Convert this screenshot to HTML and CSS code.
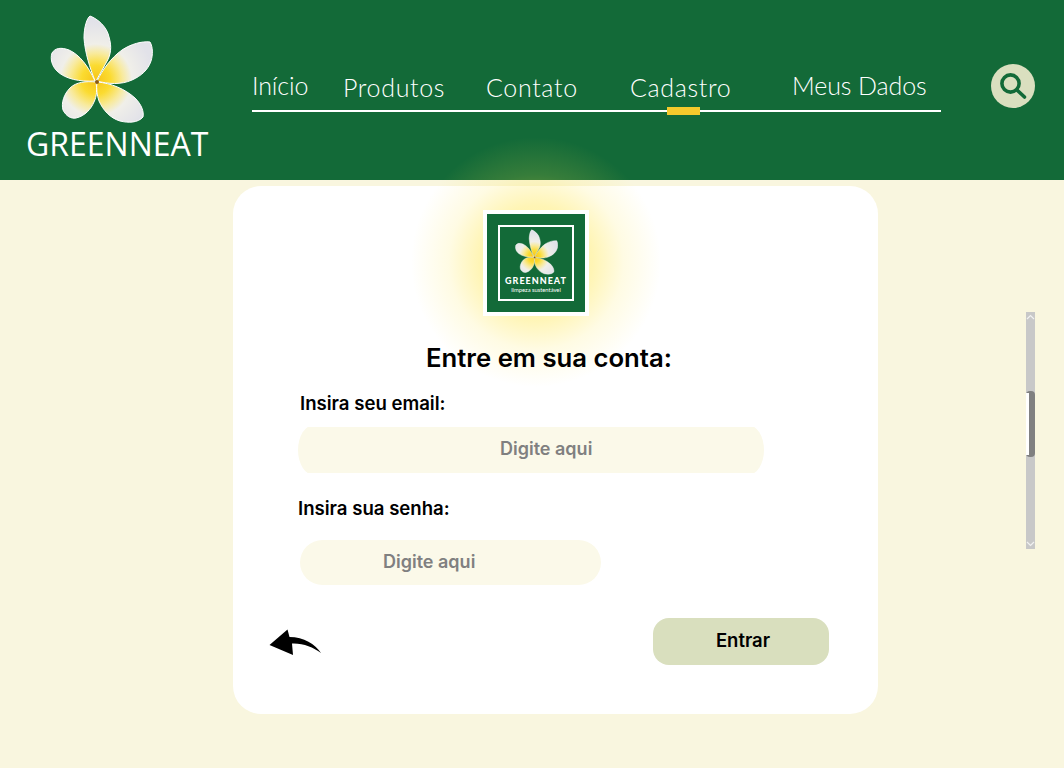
FILE: index.html
```html
<!DOCTYPE html>
<html lang="pt-BR">
<head>
<meta charset="utf-8">
<title>Greenneat</title>
<link rel="stylesheet" href="styles.css">
</head>
<body>
<svg class="defs" width="0" height="0" aria-hidden="true">
  <defs>
    <radialGradient id="petal" gradientUnits="userSpaceOnUse" cx="96" cy="80" r="58">
      <stop offset="0" stop-color="#f6c41a"/>
      <stop offset="0.25" stop-color="#fbdb30"/>
      <stop offset="0.46" stop-color="#f8ea9c"/>
      <stop offset="0.62" stop-color="#f0efe9"/>
      <stop offset="1" stop-color="#e2e2e9"/>
    </radialGradient>
    <symbol id="flower" viewBox="50 15 103 108">
      <g fill="url(#petal)" stroke="#ffffff" stroke-width="1" stroke-linejoin="round">
        <path d="M95 81C90 68 85 53 84 38C84 27 87 18 90 16C98 19 107 27 109 37C112 47 111 55 106 63C103 69 99 75 96 81Z"/>
        <path d="M97 81C103 69 111 58 122 50C131 44 142 41 150 42C153 47 153 55 151 61C148 70 141 76 132 80C121 85 108 84 97 81Z"/>
        <path d="M97 82C111 83 125 89 135 98C142 105 144 112 143 117C138 123 128 123 120 121C110 118 103 110 99 101C97 95 96 89 97 82Z"/>
        <path d="M96 82C86 81 76 82 70 88C64 94 61 103 63 110C66 116 71 119 76 118C85 116 91 109 94 102C97 96 97 89 96 82Z"/>
        <path d="M95 81C88 66 80 55 69 50C61 47 55 48 52 53C50 59 52 66 57 71C65 79 80 82 95 81Z"/>
      </g>
      <circle cx="97" cy="82" r="2" fill="#8a5a14"/>
    </symbol>
  </defs>
</svg>

<header class="topbar">
  <a class="brand">
    <svg class="brand-flower"><use href="#flower"/></svg>
    <span class="brand-name">GREENNEAT</span>
  </a>
  <nav class="nav">
    <a class="nav-item nav-raised">Início</a>
    <a class="nav-item">Produtos</a>
    <a class="nav-item">Contato</a>
    <a class="nav-item nav-active">Cadastro</a>
    <a class="nav-item nav-raised">Meus Dados</a>
  </nav>
  <button class="search" aria-label="Buscar">
    <svg viewBox="0 0 28 28" width="28" height="28">
      <circle cx="11.5" cy="11.5" r="8.6" fill="none" stroke="#136a38" stroke-width="3.6"/>
      <path d="M18 18L25.5 25" stroke="#136a38" stroke-width="3.6" stroke-linecap="round"/>
    </svg>
  </button>
</header>

<main class="card">
  <div class="logo">
    <div class="logo-frame">
      <svg class="logo-flower"><use href="#flower"/></svg>
      <span class="logo-name">GREENNEAT</span>
      <span class="logo-tag">limpeza sustentável</span>
    </div>
  </div>
  <h1 class="title">Entre em sua conta:</h1>
  <form class="form">
    <label class="label label-email">Insira seu email:</label>
    <div class="field field-email">Digite aqui</div>
    <label class="label label-pass">Insira sua senha:</label>
    <div class="field field-pass">Digite aqui</div>
    <div class="actions">
      <svg class="back" viewBox="0 0 52 27" width="52" height="27" aria-label="Voltar">
        <path d="M0.5 16L18.5 0.5L20.5 8C35 8 46 15 52 24C44 18 34 14 23 14.5L24 26Z" fill="#000"/>
      </svg>
      <button class="submit" type="button">Entrar</button>
    </div>
  </form>
</main>

<div class="glow"></div>

<div class="scrollbar">
  <svg class="scroll-arrow" viewBox="0 0 9 6" width="9" height="6"><path d="M1 5L4.5 1.5L8 5" fill="none" stroke="#f1f1f1" stroke-width="1.2"/></svg>
  <div class="scroll-thumb"></div>
  <svg class="scroll-arrow" viewBox="0 0 9 6" width="9" height="6"><path d="M1 1L4.5 4.5L8 1" fill="none" stroke="#f1f1f1" stroke-width="1.2"/></svg>
</div>
</body>
</html>
```
FILE: styles.css
```css
* { box-sizing: border-box; }
html, body { margin: 0; height: 100%; }
body {
  position: relative;
  height: 768px;
  overflow: hidden;
  background: #f9f6df;
  font-family: "Inter", "Noto Sans", sans-serif;
  color: #000;
}
.defs { position: absolute; }

.topbar {
  display: flex;
  height: 180px;
  background: #136a38;
  color: #fff;
}
.brand {
  display: flex;
  flex-direction: column;
  align-items: flex-start;
  width: 252px;
  padding: 15px 0 0 26px;
}
.brand-flower {
  width: 103px;
  height: 108px;
  margin-left: 24px;
}
.brand-name {
  font-family: "Open Sans", sans-serif;
  font-size: 32px;
  line-height: 44px;
  margin-top: -1px;
  white-space: nowrap;
}
.nav {
  display: grid;
  grid-template-columns: 91px 143px 144px 162px 149px;
  align-items: end;
  width: 689px;
  height: 112px;
  border-bottom: 2px solid #fff;
  font-family: "Lato", sans-serif;
  font-size: 25px;
  font-weight: 300;
  letter-spacing: 0.65px;
}
.nav-item {
  position: relative;
  line-height: 30px;
  padding-bottom: 8px;
  white-space: nowrap;
}
.nav-raised {
  padding-bottom: 10px;
  letter-spacing: -0.1px;
}
.nav-active::after {
  content: "";
  position: absolute;
  left: 37px;
  bottom: -5px;
  width: 33px;
  height: 8px;
  background: #f5c92c;
}
.search {
  width: 44px;
  height: 44px;
  margin: 64px 0 0 50px;
  padding: 0;
  border: 0;
  border-radius: 50%;
  background: #dadfbf;
  display: flex;
  align-items: center;
  justify-content: center;
}

.card {
  width: 645px;
  height: 528px;
  margin: 6px 0 0 233px;
  padding-top: 24px;
  background: #fff;
  border-radius: 28px;
}
.logo {
  position: relative;
  z-index: 2;
  width: 106px;
  height: 106px;
  margin-left: 250px;
  padding: 4px;
  background: #fff;
}
.logo-frame {
  height: 98px;
  background: #136a38;
  position: relative;
  color: #fff;
  display: flex;
  flex-direction: column;
  align-items: center;
}
.logo-frame::before {
  content: "";
  position: absolute;
  inset: 11px;
  border: 2px solid #fff;
}
.logo-flower {
  width: 43px;
  height: 46px;
  margin-top: 15px;
}
.logo-name {
  font-family: "Lato", sans-serif;
  font-weight: 900;
  font-size: 9px;
  letter-spacing: 1px;
  line-height: 11px;
}
.logo-tag {
  font-family: "Lato", sans-serif;
  font-size: 5.8px;
  line-height: 7px;
}
.title {
  position: relative;
  z-index: 2;
  margin: 26px 0 0 193px;
  font-size: 25.7px;
  line-height: 32px;
  font-weight: 600;
  white-space: nowrap;
}
.form {
  position: relative;
  z-index: 2;
}
.label {
  display: block;
  font-size: 18.6px;
  font-weight: 600;
  line-height: 24px;
  white-space: nowrap;
}
.label-email { margin: 17px 0 0 67px; }
.label-pass { margin: 23px 0 0 65px; }
.field {
  background: #fbf9e9;
  color: #808080;
  font-size: 18px;
  font-weight: 600;
  display: flex;
  align-items: center;
}
.field-email {
  width: 466px;
  height: 50px;
  margin: 10px 0 -2px 65px;
  padding: 0 0 4px 202px;
  border-radius: 16px / 25px;
  clip-path: inset(2px 0);
}
.field-pass {
  width: 301px;
  height: 45px;
  margin: 20px 0 0 67px;
  padding: 0 0 3px 83px;
  border-radius: 23px;
}
.actions {
  display: flex;
  justify-content: space-between;
  align-items: center;
  width: 560px;
  margin: 33px 0 0 36px;
}
.back { margin-top: 1px; }
.submit {
  width: 176px;
  height: 47px;
  padding: 0 0 4px 4px;
  border: 0;
  border-radius: 16px;
  background: #d9dfbe;
  font-family: inherit;
  font-size: 18.5px;
  font-weight: 600;
  color: #000;
}

.glow {
  position: absolute;
  left: 411px;
  top: 137px;
  width: 250px;
  height: 250px;
  border-radius: 50%;
  background: radial-gradient(circle closest-side, rgba(255, 228, 60, 0.55) 0%, rgba(255, 228, 60, 0.38) 45%, rgba(255, 230, 70, 0.15) 70%, rgba(255, 232, 80, 0) 100%);
  z-index: 1;
}

.scrollbar {
  position: absolute;
  left: 1026px;
  top: 312px;
  width: 9px;
  height: 237px;
  background: #c8c8c8;
  display: flex;
  flex-direction: column;
  justify-content: space-between;
  padding: 2px 0;
}
.scroll-arrow { display: block; }
.scroll-thumb {
  position: absolute;
  left: 0;
  top: 79px;
  width: 9px;
  height: 66px;
  background: #808080;
  border-radius: 4px;
}
.scroll-thumb::before {
  content: "";
  position: absolute;
  left: 0;
  top: 2px;
  bottom: 2px;
  width: 2.5px;
  background: #fff;
}
```
